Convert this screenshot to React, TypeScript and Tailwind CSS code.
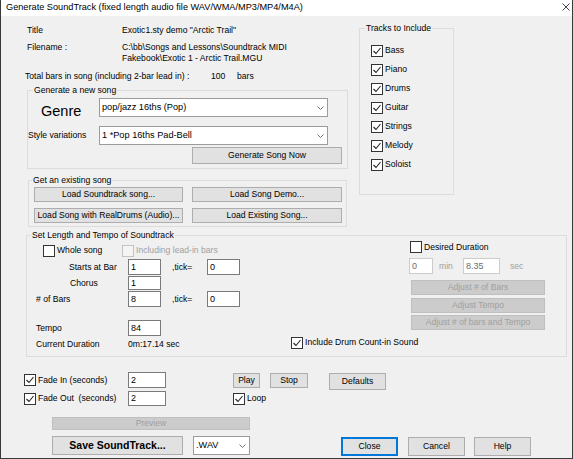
import React from 'react';

type CheckProps = {
  label: string;
  checked?: boolean;
  disabled?: boolean;
  className?: string;
};

function Check({ label, checked, disabled, className = '' }: CheckProps) {
  return (
    <div className={`flex items-center ${className}`}>
      <span
        className={`flex h-[12px] w-[12px] shrink-0 items-center justify-center border ${
          disabled ? 'border-[#c4c4c4] bg-[#f4f4f4]' : 'border-[#333333] bg-white'
        }`}
      >
        {checked && (
          <svg width="10" height="10" viewBox="0 0 10 10">
            <polyline points="1.5,5 4,7.5 8.5,2" fill="none" stroke="#222" strokeWidth="1.1" />
          </svg>
        )}
      </span>
      <span className={`ml-[2px] whitespace-pre ${disabled ? 'text-[#a0a0a0]' : ''}`}>{label}</span>
    </div>
  );
}

function Btn({
  children,
  className = '',
  disabled,
  primary,
}: {
  children: React.ReactNode;
  className?: string;
  disabled?: boolean;
  primary?: boolean;
}) {
  const look = disabled
    ? 'border border-[#bfbfbf] bg-[#cccccc] text-[#a0a0a0]'
    : primary
      ? 'border-2 border-[#0078d7] bg-[#e1e1e1]'
      : 'border border-[#adadad] bg-[#e1e1e1]';
  return (
    <button type="button" className={`flex shrink-0 items-center justify-center leading-[11px] ${look} ${className}`}>
      {children}
    </button>
  );
}

function Field({ value, className = '', disabled }: { value: string; className?: string; disabled?: boolean }) {
  return (
    <div
      className={`flex shrink-0 items-center bg-white pl-[2px] text-[9px] ${
        disabled ? 'border border-[#cccccc] text-[#6d6d6d]' : 'border border-[#7a7a7a]'
      } ${className}`}
    >
      {value}
    </div>
  );
}

function Combo({ value, className = '' }: { value: string; className?: string }) {
  return (
    <div className={`flex shrink-0 items-center justify-between border border-[#9b9b9b] bg-white pl-[2px] pr-[3px] text-[9.2px] ${className}`}>
      <span>{value}</span>
      <svg width="7" height="4" viewBox="0 0 7 4">
        <polyline points="0.5,0.5 3.5,3.5 6.5,0.5" fill="none" stroke="#707070" strokeWidth="1" />
      </svg>
    </div>
  );
}

const tracks = ['Bass', 'Piano', 'Drums', 'Guitar', 'Strings', 'Melody', 'Soloist'];

export default function App() {
  return (
    <div className="flex h-[459px] w-[573px] flex-col overflow-hidden border-x border-b border-[#3a3a3a] font-['Liberation_Sans',Arial,sans-serif] text-[8.6px] leading-[11px] text-black">
      {/* title bar */}
      <div className="flex h-[16px] shrink-0 items-center justify-between bg-white pb-[1px] pl-[5px] pr-[2px]">
        <span className="text-[9.2px]">Generate SoundTrack (fixed length audio file WAV/WMA/MP3/MP4/M4A)</span>
        <svg width="8" height="8" viewBox="0 0 8 8" className="mb-[2px]">
          <path d="M0.5 0.5 L7.5 7.5 M7.5 0.5 L0.5 7.5" stroke="#333" strokeWidth="0.9" />
        </svg>
      </div>

      <div className="flex flex-1 flex-col bg-[#f0f0f0]">
        {/* top area */}
        <div className="flex">
          <div className="flex w-[348px] flex-col">
            <div className="ml-[26px] mt-[9px] flex h-[11px] items-center">
              <span className="w-[95px]">Title</span>
              <span>Exotic1.sty demo "Arctic Trail"</span>
            </div>
            <div className="ml-[26px] mt-[6px] flex">
              <span className="w-[95px]">Filename :</span>
              <span>
                {'C:\\bb\\Songs and Lessons\\Soundtrack MIDI'}
                <br />
                {'Fakebook\\Exotic 1 - Arctic Trail.MGU'}
              </span>
            </div>
            <div className="ml-[24px] mt-[7px] flex">
              <span className="w-[186px]">Total bars in song (including 2-bar lead in) :</span>
              <span className="w-[26px]">100</span>
              <span>bars</span>
            </div>

            <fieldset className="ml-[26px] mt-[3px] w-[321px] border border-solid border-[#dcdcdc] pb-[4px]">
              <legend className="ml-[5px] px-[1px]">Generate a new song</legend>
              <div className="mt-[2px] flex h-[19px]">
                <span className="ml-[13px] mt-[5px] w-[58px] text-[14.5px] leading-[16px]">Genre</span>
                <Combo value="pop/jazz 16ths (Pop)" className="h-[19px] w-[229px]" />
              </div>
              <div className="mt-[9px] flex h-[19px] items-center">
                <span className="w-[71px]">Style variations</span>
                <Combo value="1 *Pop 16ths Pad-Bell" className="h-[19px] w-[229px]" />
              </div>
              <Btn className="ml-[164px] mt-[2px] h-[17px] w-[150px]">Generate Song Now</Btn>
            </fieldset>

            <fieldset className="ml-[27px] mt-[6px] w-[319px] border border-solid border-[#dcdcdc] pb-[3px]">
              <legend className="ml-[3px] px-[1px]">Get an existing song</legend>
              <div className="mt-[1px] flex">
                <Btn className="ml-[5px] h-[15px] w-[149px]">Load Soundtrack song...</Btn>
                <Btn className="ml-[9px] h-[15px] w-[150px]">Load Song Demo...</Btn>
              </div>
              <div className="mt-[6px] flex">
                <Btn className="ml-[5px] h-[15px] w-[149px]">Load Song with RealDrums (Audio)...</Btn>
                <Btn className="ml-[9px] h-[15px] w-[150px]">Load Existing Song...</Btn>
              </div>
            </fieldset>
          </div>

          <fieldset className="ml-[10px] mt-[7px] w-[95px] self-start border border-solid border-[#dcdcdc] pb-[20px] pt-[7px]">
            <legend className="ml-[5px] px-[1px]">Tracks to Include</legend>
            {tracks.map((t) => (
              <div key={t} className="flex h-[19px] items-center">
                <Check label={t} checked className="ml-[11px]" />
              </div>
            ))}
          </fieldset>
        </div>

        {/* length and tempo */}
        <fieldset className="ml-[25px] mt-[3px] w-[541px] border border-solid border-[#dcdcdc] pb-[6px]">
          <legend className="ml-[4px] px-[1px]">Set Length and Tempo of Soundtrack</legend>
          <div className="flex">
            <div className="flex w-[264px] flex-col">
              <div className="mt-[3px] flex h-[13px] items-center">
                <Check label="Whole song" className="ml-[16px] w-[79px]" />
                <Check label="Including lead-in bars" disabled />
              </div>
              <div className="mt-[2px] flex h-[16px] items-center">
                <span className="ml-[42px] w-[59px]">Starts at Bar</span>
                <Field value="1" className="h-[16px] w-[33px]" />
                <span className="ml-[11px] w-[35px]">,tick=</span>
                <Field value="0" className="h-[16px] w-[33px]" />
              </div>
              <div className="mt-[1px] flex h-[14px] items-center">
                <span className="ml-[43px] w-[58px]">Chorus</span>
                <Field value="1" className="h-[14px] w-[33px]" />
              </div>
              <div className="mt-[1px] flex h-[16px] items-center">
                <span className="ml-[9px] w-[92px]"># of Bars</span>
                <Field value="8" className="h-[16px] w-[33px]" />
                <span className="ml-[11px] w-[35px]">,tick=</span>
                <Field value="0" className="h-[16px] w-[33px]" />
              </div>
              <div className="mt-[13px] flex h-[16px] items-center">
                <span className="ml-[9px] w-[92px]">Tempo</span>
                <Field value="84" className="h-[16px] w-[33px]" />
              </div>
              <div className="mt-[3px] flex h-[11px] items-center">
                <span className="ml-[9px] w-[92px]">Current Duration</span>
                <span>0m:17.14 sec</span>
              </div>
            </div>

            <div className="flex flex-1 flex-col">
              <div className="flex h-[12px] items-center">
                <Check label="Desired Duration" className="ml-[119px]" />
              </div>
              <div className="mt-[5px] flex h-[16px] items-center">
                <Field value="0" disabled className="ml-[118px] h-[16px] w-[24px]" />
                <span className="ml-[6px] w-[24px] text-[#a0a0a0]">min</span>
                <Field value="8.35" disabled className="h-[16px] w-[37px]" />
                <span className="ml-[10px] text-[#a0a0a0]">sec</span>
              </div>
              <Btn disabled className="ml-[120px] mt-[6px] h-[15px] w-[134px]">Adjust # of Bars</Btn>
              <Btn disabled className="ml-[120px] mt-[3px] h-[15px] w-[134px]">Adjust Tempo</Btn>
              <Btn disabled className="ml-[120px] mt-[2px] h-[15px] w-[134px]">Adjust # of bars and Tempo</Btn>
              <div className="mt-[6px] flex h-[13px] items-center">
                <Check label="Include Drum Count-in Sound" checked />
              </div>
            </div>
          </div>
        </fieldset>

        {/* bottom controls */}
        <div className="mt-[15px] flex h-[16px] items-start">
          <div className="flex h-[16px] w-[127px] items-center pl-[23px]">
            <Check label="Fade In (seconds)" checked />
          </div>
          <Field value="2" className="h-[16px] w-[38px]" />
          <Btn className="ml-[67px] mt-[1px] h-[15px] w-[27px]">Play</Btn>
          <Btn className="ml-[10px] mt-[1px] h-[15px] w-[38px]">Stop</Btn>
          <Btn className="ml-[21px] mt-[1px] h-[17px] w-[57px]">Defaults</Btn>
        </div>
        <div className="mt-[3px] flex h-[15px] items-center">
          <div className="flex h-[15px] w-[127px] items-center pl-[23px]">
            <Check label="Fade Out  (seconds)" checked />
          </div>
          <Field value="2" className="h-[15px] w-[38px]" />
          <Check label="Loop" checked className="ml-[67px]" />
        </div>
        <Btn disabled className="ml-[51px] mt-[11px] h-[13px] w-[198px]">Preview</Btn>
        <div className="mt-[6px] flex h-[19px] items-start">
          <Btn className="ml-[51px] h-[19px] w-[131px] text-[10.5px] font-bold">Save SoundTrack...</Btn>
          <Combo value=".WAV" className="ml-[10px] h-[19px] w-[57px]" />
          <Btn primary className="ml-[91px] mt-[1px] h-[19px] w-[57px]">Close</Btn>
          <Btn className="ml-[10px] mt-[1px] h-[19px] w-[57px]">Cancel</Btn>
          <Btn className="ml-[9px] mt-[1px] h-[19px] w-[57px]">Help</Btn>
        </div>
      </div>
    </div>
  );
}
